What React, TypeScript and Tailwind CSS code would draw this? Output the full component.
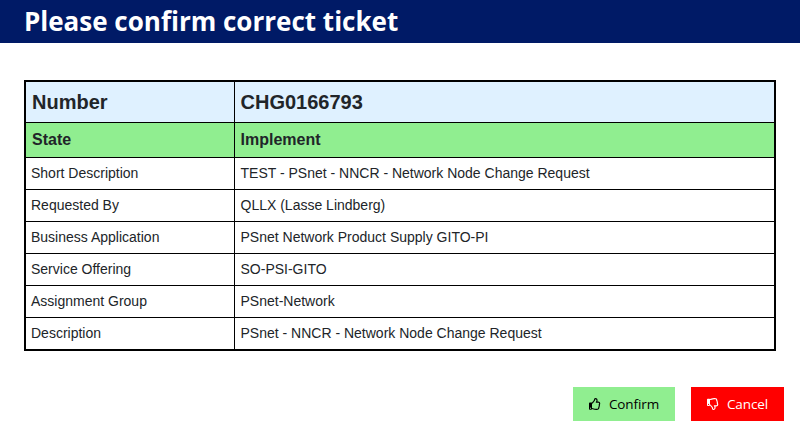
import { FaRegThumbsDown, FaRegThumbsUp } from 'react-icons/fa'

const rows = [
  ['Short Description', 'TEST - PSnet - NNCR - Network Node Change Request'],
  ['Requested By', 'QLLX (Lasse Lindberg)'],
  ['Business Application', 'PSnet Network Product Supply GITO-PI'],
  ['Service Offering', 'SO-PSI-GITO'],
  ['Assignment Group', 'PSnet-Network'],
  ['Description', 'PSnet - NNCR - Network Node Change Request'],
]

export default function App() {
  return (
    <div className="h-[437px] w-[800px] overflow-hidden bg-white">
      <header className="flex h-[43px] items-center bg-[#001a66] pl-6 font-['Open_Sans',sans-serif] text-[26px] font-bold text-white">
        Please confirm correct ticket
      </header>

      <main className="px-6 pt-[37px]">
        <table className="w-[752px] table-fixed border-collapse border-2 border-black font-['Liberation_Sans',sans-serif] text-[14px] text-[#212529]">
          <colgroup>
            <col className="w-[209px]" />
            <col />
          </colgroup>
          <tbody>
            <tr className="h-[41px] bg-[#dff1ff] text-[20px] font-bold">
              <td className="border border-black px-[6px]">Number</td>
              <td className="border border-black px-[6px]">CHG0166793</td>
            </tr>
            <tr className="h-[35px] bg-[#90ee90] text-[16px] font-bold">
              <td className="border border-black px-[6px]">State</td>
              <td className="border border-black px-[6px]">Implement</td>
            </tr>
            {rows.map(([label, value]) => (
              <tr key={label} className="h-8 last:h-[33px]">
                <td className="border border-black px-[5px]">{label}</td>
                <td className="border border-black px-[6px]">{value}</td>
              </tr>
            ))}
          </tbody>
        </table>
      </main>

      <footer className="flex justify-end gap-4 pt-9 pr-4 font-['Open_Sans',sans-serif] text-[13.5px] tracking-[-0.1px]">
        <button
          type="button"
          className="flex h-[34px] w-[102px] items-center justify-center gap-2 bg-[#90ee90] text-black"
        >
          <FaRegThumbsUp className="h-3 w-3" />
          Confirm
        </button>
        <button
          type="button"
          className="flex h-[34px] w-[93px] items-center justify-center gap-2 bg-[#ff0000] text-white"
        >
          <FaRegThumbsDown className="h-3 w-3" />
          Cancel
        </button>
      </footer>
    </div>
  )
}
